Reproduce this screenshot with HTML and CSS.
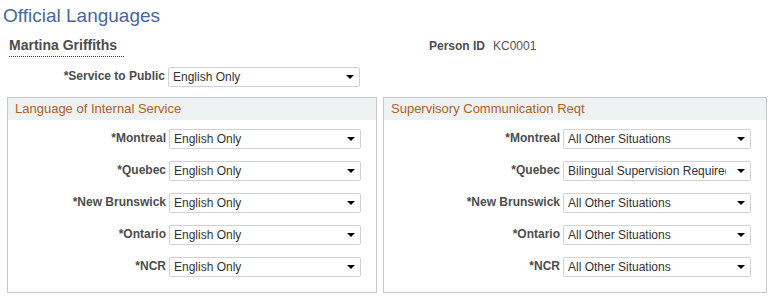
FILE: index.html
```
<!DOCTYPE html>
<html lang="en">
<head>
    <meta charset="UTF-8">
    <title>Official Languages</title>
<link rel="stylesheet" href="styles.css">
</head>
<body>
    <h1 class="page-title">Official Languages</h1>

    <div class="person-row">
        <span class="person-name">Martina Griffiths</span>
        <span class="person-id"><b>Person ID</b>KC0001</span>
    </div>

    <div class="service-row">
        <label for="svcPublic">*Service to Public</label>
        <span class="select-wrap wide">
            <select id="svcPublic"><option>English Only</option></select>
        </span>
    </div>

    <div class="groups">
        <!-- left box -->
        <section class="group group-left">
            <div class="group-head">Language of Internal Service</div>
            <div class="group-body">
                <label>*Montreal</label>
                <span class="select-wrap"><select><option>English Only</option></select></span>
                <label>*Quebec</label>
                <span class="select-wrap"><select><option>English Only</option></select></span>
                <label>*New Brunswick</label>
                <span class="select-wrap"><select><option>English Only</option></select></span>
                <label>*Ontario</label>
                <span class="select-wrap"><select><option>English Only</option></select></span>
                <label>*NCR</label>
                <span class="select-wrap"><select><option>English Only</option></select></span>
            </div>
        </section>

        <!-- right box -->
        <section class="group group-right">
            <div class="group-head">Supervisory Communication Reqt</div>
            <div class="group-body">
                <label>*Montreal</label>
                <span class="select-wrap"><select><option>All Other Situations</option></select></span>
                <label>*Quebec</label>
                <span class="select-wrap"><select><option>Bilingual Supervision Required</option></select></span>
                <label>*New Brunswick</label>
                <span class="select-wrap"><select><option>All Other Situations</option></select></span>
                <label>*Ontario</label>
                <span class="select-wrap"><select><option>All Other Situations</option></select></span>
                <label>*NCR</label>
                <span class="select-wrap"><select><option>All Other Situations</option></select></span>
            </div>
        </section>
    </div>
</body>
</html>
```

FILE: styles.css
```
body {
    margin: 0;
    font-family: "Liberation Sans", Arial, sans-serif;
    font-size: 12px;
    color: #333333;
    background: #ffffff;
}

.page-title {
    margin: 0;
    padding: 4px 0 0 3px;
    font-size: 19px;
    font-weight: normal;
    line-height: 23px;
    color: #4a6897;
}

.person-row {
    display: flex;
    align-items: baseline;
    padding: 10px 0 0 9px;
    height: 22px;
}

.person-name {
    width: 420px;
    font-size: 14px;
    font-weight: bold;
    color: #4d4d4d;
    line-height: 17px;
}

.person-name::after {
    content: '';
    display: block;
    width: 115px;
    margin-top: 2px;
    border-bottom: 1px dotted #333333;
}

.person-id {
    color: #555555;
}

.person-id b {
    color: #4d4d4d;
    margin-right: 8px;
}

.service-row {
    display: flex;
    align-items: flex-start;
    gap: 3px;
    margin-top: 8px;
}

.service-row label {
    width: 165px;
    text-align: right;
    font-weight: bold;
    line-height: 16px;
    padding-top: 1px;
    color: #4d4d4d;
}

/* select boxes */
.select-wrap {
    position: relative;
    display: block;
    height: 20px;
}

.select-wrap::after {
    content: '';
    position: absolute;
    right: 6px;
    top: 8px;
    border-left: 4px solid transparent;
    border-right: 4px solid transparent;
    border-top: 4px solid #000000;
    pointer-events: none;
}

.select-wrap select {
    -webkit-appearance: none;
    appearance: none;
    width: 100%;
    height: 20px;
    margin: 0;
    padding: 0 24px 0 4px;
    font-family: "Liberation Sans", Arial, sans-serif;
    font-size: 12px;
    color: #333333;
    background: #ffffff;
    border: 1px solid #cfd3d6;
    border-radius: 2px;
    outline: none;
}

.wide {
    width: 192px;
}

/* group boxes */
.groups {
    display: flex;
    gap: 6px;
    margin: 10px 0 0 7px;
}

.group {
    border: 1px solid #c6cacd;
    height: 194px;
}

.group-left {
    width: 368px;
}

.group-right {
    width: 382px;
}

.group-head {
    height: 22px;
    line-height: 21px;
    padding-left: 7px;
    background: #eef2f3;
    color: #b0601f;
    font-size: 13px;
}

.group-body {
    display: grid;
    column-gap: 3px;
    row-gap: 12px;
    padding: 9px 0 0 0;
}

.group-left .group-body {
    grid-template-columns: 158px 192px;
}

.group-right .group-body {
    grid-template-columns: 176px 188px;
}

.group-body label {
    text-align: right;
    font-weight: bold;
    line-height: 16px;
    padding-top: 1px;
    color: #4d4d4d;
}
```
